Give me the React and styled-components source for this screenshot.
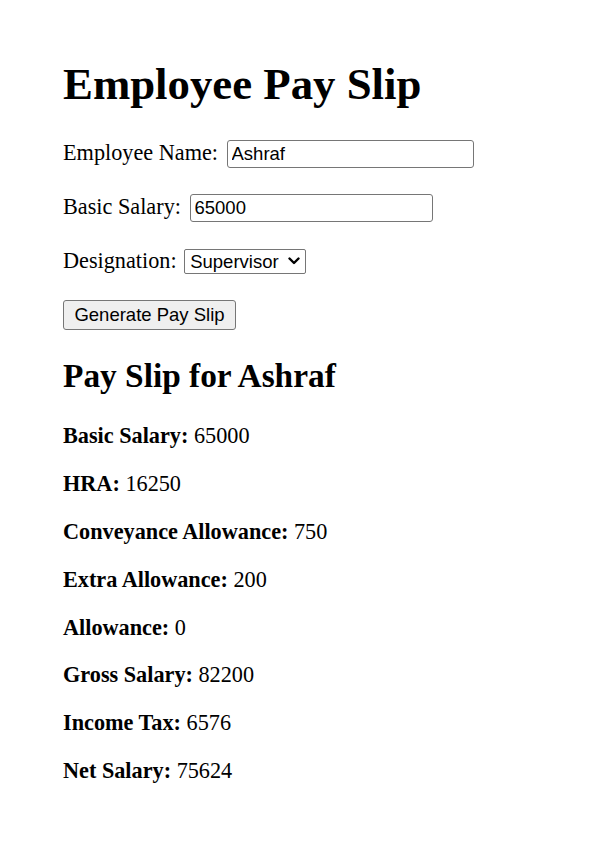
import React from "react";
import styled, { createGlobalStyle } from "styled-components";

const GlobalStyle = createGlobalStyle`
  html, body { margin: 0; padding: 0; background: #ffffff; }
  body {
    font-family: "Liberation Serif", "Times New Roman", serif;
    font-size: 22.24px;
    color: #000000;
  }
`;

const Page = styled.div`
  padding: 28px 20px 20px 63px;
`;

const Title = styled.h1`
  font-size: 44.8px;
  font-weight: bold;
  margin: 29.8px 0;
  line-height: normal;
`;

const FormRow = styled.p`
  margin: 26px 0;
  line-height: normal;
`;

const Label = styled.label`
  font-size: 22.24px;
`;

const TextInput = styled.input`
  box-sizing: border-box;
  width: ${(p) => p.$w}px;
  height: 28px;
  margin: 0 0 0 3px;
  padding: 1px 4px;
  font-family: "Liberation Sans", Arial, sans-serif;
  font-size: 18.5px;
  color: #000;
  border: 1.4px solid #767676;
  border-radius: 3px;
  background: #fff;
  vertical-align: baseline;
`;

const SelectWrap = styled.span`
  position: relative;
  display: inline-block;
  vertical-align: baseline;
  margin-left: 2px;
`;

const Select = styled.select`
  appearance: none;
  -webkit-appearance: none;
  box-sizing: border-box;
  width: 122px;
  height: 25px;
  margin: 0;
  padding: 0 24px 0 5px;
  font-family: "Liberation Sans", Arial, sans-serif;
  font-size: 18.5px;
  color: #000;
  border: 1.4px solid #767676;
  border-radius: 2px;
  background: #fff;
`;

const Chevron = styled.svg`
  position: absolute;
  right: 6px;
  top: 50%;
  transform: translateY(-50%);
  width: 12px;
  height: 9px;
  pointer-events: none;
`;

const Button = styled.button`
  box-sizing: border-box;
  width: 173px;
  height: 30px;
  margin: 0;
  padding: 1px 8px;
  font-family: "Liberation Sans", Arial, sans-serif;
  font-size: 18.5px;
  color: #000;
  background: #efefef;
  border: 1.4px solid #767676;
  border-radius: 3px;
`;

const SubTitle = styled.h2`
  font-size: 33.36px;
  font-weight: bold;
  margin: 27.7px 0;
  line-height: normal;
`;

const ResultRow = styled.p`
  margin: 21.9px 0;
  line-height: normal;
`;

const rows = [
  ["Basic Salary:", "65000"],
  ["HRA:", "16250"],
  ["Conveyance Allowance:", "750"],
  ["Extra Allowance:", "200"],
  ["Allowance:", "0"],
  ["Gross Salary:", "82200"],
  ["Income Tax:", "6576"],
  ["Net Salary:", "75624"],
];

export default function App() {
  return (
    <>
      <GlobalStyle />
      <Page>
        <Title>Employee Pay Slip</Title>
        <FormRow>
          <Label htmlFor="name">Employee Name:</Label>{" "}
          <TextInput id="name" $w={247} defaultValue="Ashraf" />
        </FormRow>
        <FormRow>
          <Label htmlFor="basic">Basic Salary:</Label>{" "}
          <TextInput id="basic" $w={243} defaultValue="65000" />
        </FormRow>
        <FormRow>
          <Label htmlFor="desig">Designation:</Label>{" "}
          <SelectWrap>
            <Select id="desig" defaultValue="Supervisor">
              <option>Manager</option>
              <option>Supervisor</option>
              <option>Clerk</option>
            </Select>
            <Chevron viewBox="0 0 12 9">
              <path d="M1.5 2 L6 6.5 L10.5 2" fill="none" stroke="#000" strokeWidth="2.4" strokeLinecap="round" strokeLinejoin="round" />
            </Chevron>
          </SelectWrap>
        </FormRow>
        <FormRow>
          <Button>Generate Pay Slip</Button>
        </FormRow>
        <SubTitle>Pay Slip for Ashraf</SubTitle>
        {rows.map(([k, v]) => (
          <ResultRow key={k}>
            <strong>{k}</strong> {v}
          </ResultRow>
        ))}
      </Page>
    </>
  );
}
